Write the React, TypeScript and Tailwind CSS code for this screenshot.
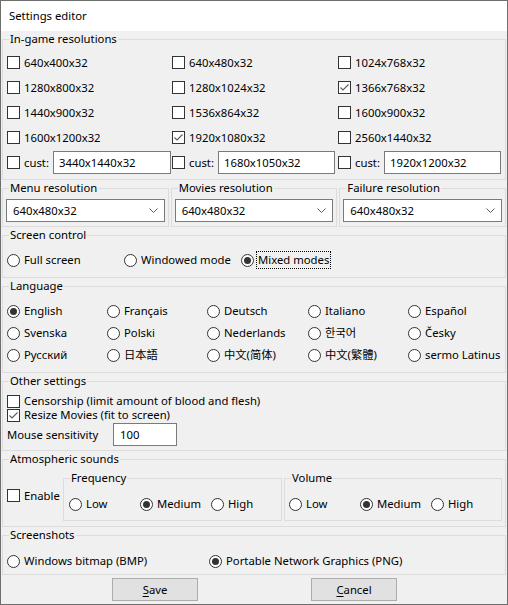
import React from 'react';
import clsx from 'clsx';

const CheckBox = ({ checked = false }: { checked?: boolean }) => (
  <span className="w-[13px] h-[13px] border border-[#333333] bg-white flex items-center justify-center shrink-0">
    {checked && (
      <svg width="11" height="11" viewBox="0 0 11 11">
        <polyline points="1.5,5.5 4,8 9.5,2.5" fill="none" stroke="#5a5a5a" strokeWidth="1.1" />
      </svg>
    )}
  </span>
);

const RadioDot = ({ checked = false }: { checked?: boolean }) => (
  <span className="w-[13px] h-[13px] rounded-full border border-[#333333] bg-white flex items-center justify-center shrink-0">
    {checked && <span className="w-[7px] h-[7px] rounded-full bg-[#333333]" />}
  </span>
);

const Check = ({ label, checked }: { label: string; checked?: boolean }) => (
  <label className="flex items-center gap-[4px] whitespace-nowrap">
    <CheckBox checked={checked} />
    <span>{label}</span>
  </label>
);

const Radio = ({ label, checked, focused }: { label: string; checked?: boolean; focused?: boolean }) => (
  <label className="flex items-center gap-[3px] whitespace-nowrap">
    <RadioDot checked={checked} />
    <span className={clsx('px-[1px]', focused && 'outline outline-1 outline-dotted outline-black')}>{label}</span>
  </label>
);

const Group = ({ label, className, children }: { label: string; className?: string; children: React.ReactNode }) => (
  <fieldset className={clsx('border border-[#dcdcdc] min-w-0', className)}>
    <legend className="ml-[6px] px-[1px] leading-[16px]">{label}</legend>
    {children}
  </fieldset>
);

const TextBox = ({ value, className }: { value: string; className?: string }) => (
  <input
    readOnly
    defaultValue={value}
    className={clsx('h-[23px] border border-[#7a7a7a] bg-white px-[5px] outline-none', className)}
  />
);

const Combo = ({ value }: { value: string }) => (
  <div className="h-[23px] border border-[#7a7a7a] bg-white flex items-center justify-between pl-[6px] pr-[6px]">
    <span>{value}</span>
    <svg width="9" height="6" viewBox="0 0 9 6">
      <polyline points="0.5,0.5 4.5,4.5 8.5,0.5" fill="none" stroke="#606060" strokeWidth="1" />
    </svg>
  </div>
);

const resolutions: [string, boolean][] = [
  ['640x400x32', false],
  ['640x480x32', false],
  ['1024x768x32', false],
  ['1280x800x32', false],
  ['1280x1024x32', false],
  ['1366x768x32', true],
  ['1440x900x32', false],
  ['1536x864x32', false],
  ['1600x900x32', false],
  ['1600x1200x32', false],
  ['1920x1080x32', true],
  ['2560x1440x32', false],
];

const custom = ['3440x1440x32', '1680x1050x32', '1920x1200x32'];

const languages = [
  'English', 'Français', 'Deutsch', 'Italiano', 'Español',
  'Svenska', 'Polski', 'Nederlands', '한국어', 'Česky',
  'Русский', '日本語', '中文(简体)', '中文(繁體)', 'sermo Latinus',
];

const App: React.FC = () => {
  return (
    <div className="w-[508px] h-[605px] border border-[#6e6e6e] bg-[#f0f0f0] text-black text-[11.3px] leading-[16px] font-['Noto_Sans','Noto_Sans_CJK_SC','Noto_Sans_CJK_JP','Noto_Sans_CJK_KR',sans-serif] flex flex-col overflow-hidden">
      {/* title bar */}
      <div className="h-[30px] bg-white flex items-center pl-[8px] shrink-0">Settings editor</div>

      <div className="flex flex-col px-[1px]">
        <Group label="In-game resolutions">
          <div className="grid grid-cols-[165px_166px_1fr] auto-rows-[25px] pl-[4px] pt-[3px] pb-[4px]">
            {resolutions.map(([r, c]) => (
              <div key={r} className="flex items-center">
                <Check label={r} checked={c} />
              </div>
            ))}
            {custom.map((v, i) => (
              <div key={v} className="flex items-center">
                <CheckBox />
                <span className="w-[33px] pl-[4px]">cust:</span>
                <TextBox value={v} className={i === 0 ? 'w-[118px]' : 'w-[117px]'} />
              </div>
            ))}
          </div>
        </Group>

        <div className="flex gap-[2px]">
          {['Menu resolution', 'Movies resolution', 'Failure resolution'].map((l) => (
            <Group key={l} label={l} className="flex-1">
              <div className="px-[3px] pt-[3px] pb-[4px]">
                <Combo value="640x480x32" />
              </div>
            </Group>
          ))}
        </div>

        <Group label="Screen control">
          <div className="flex h-[16px] pl-[4px] mt-[9px] mb-[9px]">
            <div className="w-[117px] flex"><Radio label="Full screen" /></div>
            <div className="w-[117px] flex"><Radio label="Windowed mode" /></div>
            <Radio label="Mixed modes" checked focused />
          </div>
        </Group>

        <Group label="Language">
          <div className="grid grid-cols-[100px_100px_101px_100px_1fr] auto-rows-[22px] pl-[4px] pt-[6px] pb-[6px]">
            {languages.map((l) => (
              <div key={l} className="flex items-center">
                <Radio label={l} checked={l === 'English'} />
              </div>
            ))}
          </div>
        </Group>

        <Group label="Other settings">
          <div className="flex flex-col pl-[4px] pt-[5px] pb-[4px]">
            <div className="h-[14px] flex items-center">
              <Check label="Censorship (limit amount of blood and flesh)" />
            </div>
            <div className="h-[14px] flex items-center">
              <Check label="Resize Movies (fit to screen)" checked />
            </div>
            <div className="flex items-center mt-[1px]">
              <span className="w-[106px]">Mouse sensitivity</span>
              <TextBox value="100" className="w-[64px] px-[6px]" />
            </div>
          </div>
        </Group>

        <Group label="Atmospheric sounds">
          <div className="flex items-center pl-[4px] pr-[3px] pt-[3px] pb-[5px]">
            <div className="w-[56px] flex"><Check label="Enable" /></div>
            <Group label="Frequency" className="w-[219px]">
              <div className="flex h-[16px] pl-[5px] mt-[10px] mb-[8px]">
                <div className="w-[71px] flex"><Radio label="Low" /></div>
                <div className="w-[71px] flex"><Radio label="Medium" checked /></div>
                <Radio label="High" />
              </div>
            </Group>
            <Group label="Volume" className="ml-[2px] flex-1">
              <div className="flex h-[16px] pl-[4px] mt-[10px] mb-[8px]">
                <div className="w-[71px] flex"><Radio label="Low" /></div>
                <div className="w-[71px] flex"><Radio label="Medium" checked /></div>
                <Radio label="High" />
              </div>
            </Group>
          </div>
        </Group>

        <Group label="Screenshots">
          <div className="flex h-[16px] pl-[4px] mt-[10px] mb-[5px]">
            <div className="w-[202px] flex"><Radio label="Windows bitmap (BMP)" /></div>
            <Radio label="Portable Network Graphics (PNG)" checked />
          </div>
        </Group>

        <div className="flex pl-[110px] gap-[113px] mt-[3px]">
          <button className="w-[86px] h-[23px] bg-[#e1e1e1] border border-[#adadad]">
            <span className="underline underline-offset-2">S</span>ave
          </button>
          <button className="w-[86px] h-[23px] bg-[#e1e1e1] border border-[#adadad]">
            <span className="underline underline-offset-2">C</span>ancel
          </button>
        </div>
      </div>
    </div>
  );
};

export default App;
